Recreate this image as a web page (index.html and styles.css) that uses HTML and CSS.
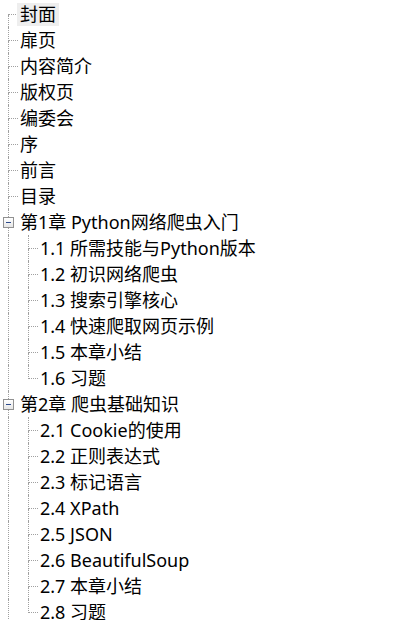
FILE: index.html
```html
<!DOCTYPE html>
<html>
<head>
<meta charset="utf-8">
<link rel="stylesheet" href="styles.css">
</head>
<body>
<div class="tree">
  <div class="row"><span class="cell first"><i class="t"></i><i class="b"></i></span><span class="label sel">封面</span></div>
  <div class="row"><span class="cell tee"><i class="t"></i><i class="b"></i></span><span class="label">扉页</span></div>
  <div class="row"><span class="cell tee"><i class="t"></i><i class="b"></i></span><span class="label">内容简介</span></div>
  <div class="row"><span class="cell tee"><i class="t"></i><i class="b"></i></span><span class="label">版权页</span></div>
  <div class="row"><span class="cell tee"><i class="t"></i><i class="b"></i></span><span class="label">编委会</span></div>
  <div class="row"><span class="cell tee"><i class="t"></i><i class="b"></i></span><span class="label">序</span></div>
  <div class="row"><span class="cell tee"><i class="t"></i><i class="b"></i></span><span class="label">前言</span></div>
  <div class="row"><span class="cell tee"><i class="t"></i><i class="b"></i></span><span class="label">目录</span></div>
  <div class="row"><span class="cell exp"><i class="et"></i><i class="box"><i class="minus"></i></i><i class="eb"></i></span><span class="label">第1章 Python网络爬虫入门</span></div>
  <div class="row"><span class="cell pipe"><i class="p"></i></span><span class="cell tee"><i class="t"></i><i class="b"></i></span><span class="label">1.1 所需技能与Python版本</span></div>
  <div class="row"><span class="cell pipe"><i class="p"></i></span><span class="cell tee"><i class="t"></i><i class="b"></i></span><span class="label">1.2 初识网络爬虫</span></div>
  <div class="row"><span class="cell pipe"><i class="p"></i></span><span class="cell tee"><i class="t"></i><i class="b"></i></span><span class="label">1.3 搜索引擎核心</span></div>
  <div class="row"><span class="cell pipe"><i class="p"></i></span><span class="cell tee"><i class="t"></i><i class="b"></i></span><span class="label">1.4 快速爬取网页示例</span></div>
  <div class="row"><span class="cell pipe"><i class="p"></i></span><span class="cell tee"><i class="t"></i><i class="b"></i></span><span class="label">1.5 本章小结</span></div>
  <div class="row"><span class="cell pipe"><i class="p"></i></span><span class="cell elbow"><i class="t"></i><i class="b"></i></span><span class="label">1.6 习题</span></div>
  <div class="row"><span class="cell exp"><i class="et"></i><i class="box"><i class="minus"></i></i><i class="eb"></i></span><span class="label">第2章 爬虫基础知识</span></div>
  <div class="row"><span class="cell pipe"><i class="p"></i></span><span class="cell tee"><i class="t"></i><i class="b"></i></span><span class="label">2.1 Cookie的使用</span></div>
  <div class="row"><span class="cell pipe"><i class="p"></i></span><span class="cell tee"><i class="t"></i><i class="b"></i></span><span class="label">2.2 正则表达式</span></div>
  <div class="row"><span class="cell pipe"><i class="p"></i></span><span class="cell tee"><i class="t"></i><i class="b"></i></span><span class="label">2.3 标记语言</span></div>
  <div class="row"><span class="cell pipe"><i class="p"></i></span><span class="cell tee"><i class="t"></i><i class="b"></i></span><span class="label">2.4 XPath</span></div>
  <div class="row"><span class="cell pipe"><i class="p"></i></span><span class="cell tee"><i class="t"></i><i class="b"></i></span><span class="label">2.5 JSON</span></div>
  <div class="row"><span class="cell pipe"><i class="p"></i></span><span class="cell tee"><i class="t"></i><i class="b"></i></span><span class="label">2.6 BeautifulSoup</span></div>
  <div class="row"><span class="cell pipe"><i class="p"></i></span><span class="cell tee"><i class="t"></i><i class="b"></i></span><span class="label">2.7 本章小结</span></div>
  <div class="row"><span class="cell pipe"><i class="p"></i></span><span class="cell elbow"><i class="t"></i><i class="b"></i></span><span class="label">2.8 习题</span></div>
  <div class="row"><span class="cell pipe"><i class="p"></i></span></div>
</div>
</body>
</html>
```
FILE: styles.css
```css
html, body {
  margin: 0;
  padding: 0;
  background: #ffffff;
  overflow: hidden;
}
.tree {
  padding-top: 1px;
  font-family: "Noto Sans", "Noto Sans CJK SC", sans-serif;
  font-size: 18px;
  color: #000000;
}
.row {
  display: flex;
  align-items: center;
  height: 26px;
}
.cell {
  width: 20px;
  height: 26px;
  flex: none;
  display: flex;
  flex-direction: column;
}
.cell i {
  display: block;
  font-style: normal;
}
.cell .t {
  height: 14px;
  width: 10px;
  margin-left: 8px;
  box-sizing: border-box;
  border-left: 1px dotted #a0a0a0;
  border-bottom: 1px dotted #a0a0a0;
}
.cell .b {
  height: 12px;
  margin-left: 8px;
  width: 1px;
  box-sizing: border-box;
  border-left: 1px dotted #a0a0a0;
}
.cell.first .t {
  border-left: none;
}
.cell.elbow .b {
  border-left: none;
}
.cell .p {
  height: 26px;
  width: 1px;
  margin-left: 8px;
  border-left: 1px dotted #a0a0a0;
  box-sizing: border-box;
}
.cell .et {
  height: 8px;
  width: 1px;
  margin-left: 8px;
  border-left: 1px dotted #a0a0a0;
  box-sizing: border-box;
}
.cell .eb {
  flex: 1;
  width: 1px;
  margin-left: 8px;
  border-left: 1px dotted #a0a0a0;
  box-sizing: border-box;
}
.cell .box {
  width: 11px;
  height: 11px;
  margin-left: 3px;
  box-sizing: border-box;
  border: 1px solid #919191;
  background: linear-gradient(#ffffff, #e6e6e6);
  display: flex;
  align-items: center;
  justify-content: center;
}
.cell .box .minus {
  width: 5px;
  height: 1px;
  background: #2c4a8c;
}
.label {
  margin-left: -3px;
  padding: 0 3px;
  height: 23px;
  line-height: 23px;
  white-space: nowrap;
}
.label.sel {
  background: #eeeeee;
}
```
